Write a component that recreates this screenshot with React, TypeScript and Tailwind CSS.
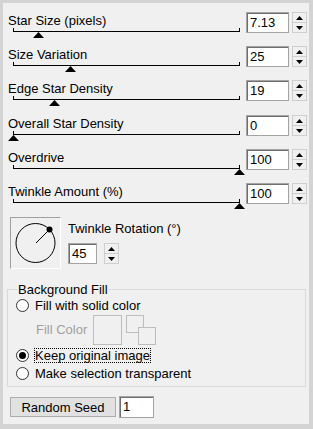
import React from "react";

const rows = [
  { label: "Star Size (pixels)", value: "7.13", pos: 25, tall: false },
  { label: "Size Variation", value: "25", pos: 57, tall: false },
  { label: "Edge Star Density", value: "19", pos: 41, tall: true },
  { label: "Overall Star Density", value: "0", pos: 0, tall: false },
  { label: "Overdrive", value: "100", pos: 226, tall: false },
  { label: "Twinkle Amount (%)", value: "100", pos: 226, tall: false },
];

function Spinner() {
  return (
    <div className="flex flex-col w-[15px] h-[21px] border border-[#cfcfcf] bg-[#f0f0f0]">
      <div className="flex-1 flex items-center justify-center border-b border-[#cfcfcf]">
        <svg width="7" height="4" viewBox="0 0 7 4">
          <polygon points="3.5,0 7,4 0,4" fill="#000" />
        </svg>
      </div>
      <div className="flex-1 flex items-center justify-center">
        <svg width="7" height="4" viewBox="0 0 7 4">
          <polygon points="0,0 7,0 3.5,4" fill="#000" />
        </svg>
      </div>
    </div>
  );
}

function NumBox({ value, w }: { value: string; w: string }) {
  return (
    <div
      className={`${w} h-[21px] bg-white border border-[#a3a3a3] shadow-[inset_1px_1px_0_#6f6f6f] pl-[3px] leading-[19px] text-[13px]`}
    >
      {value}
    </div>
  );
}

function SliderRow({ label, value, pos, tall }: { label: string; value: string; pos: number; tall: boolean }) {
  return (
    <div className={`flex ${tall ? "h-[35px]" : "h-[34px]"}`}>
      <div className="w-[238px]">
        <div className="mt-[1px] h-[15px] leading-[15px] pl-[5px] whitespace-nowrap">{label}</div>
        <div className="relative ml-[10px] w-[227px] h-[4px] border-x border-b border-black">
          <svg
            className="absolute top-[4px]"
            style={{ left: pos - 6 }}
            width="11"
            height="6"
            viewBox="0 0 11 6"
          >
            <polygon points="5.5,0 11,6 0,6" fill="#000" />
          </svg>
        </div>
      </div>
      <div className="ml-[5px]">
        <NumBox value={value} w="w-[43px]" />
      </div>
      <div className="ml-[3px]">
        <Spinner />
      </div>
    </div>
  );
}

function Radio({ checked }: { checked?: boolean }) {
  return (
    <div className="w-[13px] h-[13px] rounded-full border border-[#333] bg-white flex items-center justify-center shrink-0">
      {checked && <div className="w-[7px] h-[7px] rounded-full bg-[#000]" />}
    </div>
  );
}

export default function App() {
  return (
    <div className="w-[313px] h-[429px] bg-[#d4d4d4] pt-[3px] pl-[3px] pr-[4px] pb-[5px] font-['Liberation_Sans',Arial,sans-serif] text-[13px] text-black">
      <div className="w-full h-full bg-[#f0f0f0] pt-[9px] flex flex-col">
        {rows.map((r) => (
          <SliderRow key={r.label} {...r} />
        ))}

        <div className="flex h-[52px]">
          <div className="ml-[7px] w-[51px] h-[52px] border-t border-l border-[#a0a0a0] border-r border-b border-r-white border-b-white flex items-center justify-center">
            <svg width="49" height="50" viewBox="0 0 49 50">
              <circle cx="24.5" cy="25" r="19.5" fill="none" stroke="#000" strokeWidth="1" />
              <line x1="25" y1="25" x2="38.5" y2="11.5" stroke="#000" strokeWidth="1" />
              <circle cx="38.5" cy="11.5" r="3" fill="#000" />
            </svg>
          </div>
          <div className="ml-[7px] flex flex-col">
            <div className="mt-[4px] h-[15px] leading-[15px] whitespace-nowrap">Twinkle Rotation (°)</div>
            <div className="mt-[7px] flex">
              <NumBox value="45" w="w-[29px]" />
              <div className="ml-[7px]">
                <Spinner />
              </div>
            </div>
          </div>
        </div>

        <fieldset className="mt-[13px] ml-[4px] mr-[3px] border border-[#d9d9d9] px-[8px] pb-[5px]">
          <legend className="ml-[1px] px-[1px] h-[15px] leading-[15px]">Background Fill</legend>
          <div className="mt-[1px] flex items-center h-[15px] gap-[6px]">
            <Radio />
            <span className="leading-[15px] whitespace-nowrap">Fill with solid color</span>
          </div>
          <div className="mt-[2px] flex h-[30px] pl-[20px]">
            <span className="mt-[7px] h-[15px] leading-[15px] text-[#a0a0a0] whitespace-nowrap">Fill Color</span>
            <div className="ml-[6px] w-[29px] h-[30px] border border-[#bdbdbd]" />
            <div className="ml-[4px] relative w-[30px] h-[30px]">
              <div className="absolute left-[0px] top-[0px] w-[18px] h-[18px] border border-[#bdbdbd] bg-[#f0f0f0]" />
              <div className="absolute left-[12px] top-[12px] w-[18px] h-[18px] border border-[#bdbdbd] bg-[#f0f0f0]" />
            </div>
          </div>
          <div className="mt-[3px] flex items-center h-[15px] gap-[5px]">
            <Radio checked />
            <span className="leading-[13px] border border-dotted border-black px-[0px] whitespace-nowrap">Keep original image</span>
          </div>
          <div className="mt-[3px] flex items-center h-[15px] gap-[6px]">
            <Radio />
            <span className="leading-[15px] whitespace-nowrap">Make selection transparent</span>
          </div>
        </fieldset>

        <div className="mt-[9px] flex items-start pl-[7px]">
          <div className="mt-[1px] w-[106px] h-[20px] bg-[#e1e1e1] border border-[#adadad] flex items-center justify-center leading-[15px]">
            Random Seed
          </div>
          <div className="ml-[3px]">
            <div className="w-[35px] h-[22px] bg-white border border-[#a3a3a3] shadow-[inset_1px_1px_0_#6f6f6f] pl-[3px] leading-[20px]">1</div>
          </div>
        </div>
      </div>
    </div>
  );
}
